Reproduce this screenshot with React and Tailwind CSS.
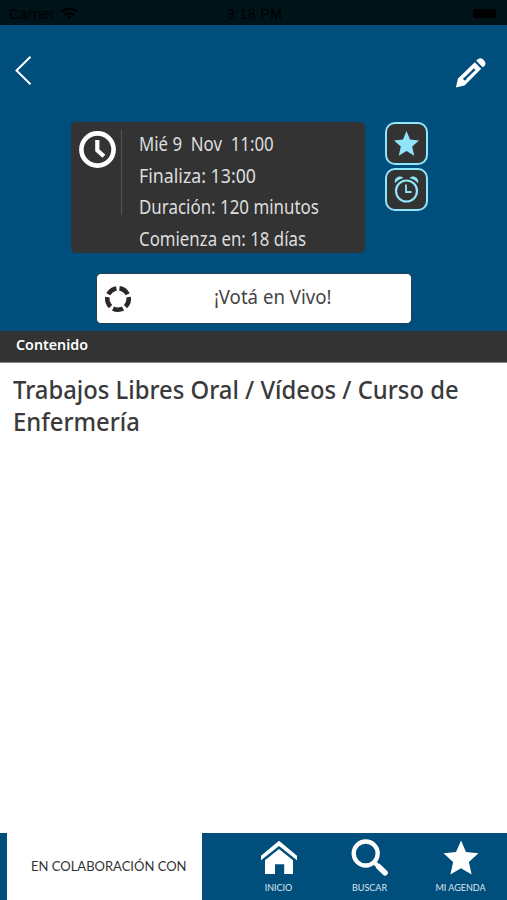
const details = [
  { text: 'Mié 9\u00a0 Nov\u00a0 11:00', fit: 'scale-x-[0.885]' },
  { text: 'Finaliza: 13:00', fit: 'scale-x-[0.935]' },
  { text: 'Duración: 120 minutos', fit: 'scale-x-[0.89]' },
  { text: 'Comienza en: 18 días', fit: 'scale-x-[0.885]' },
];

function StatusBar() {
  return (
    <div className="flex h-[25px] items-center justify-between bg-[#001318] pl-[9px] pr-[11px] pt-[2px] font-['Liberation_Sans',sans-serif] text-[14px] leading-none text-black">
      <div className="flex w-[216px] items-center gap-[6px]">
        <span className="tracking-[0.5px]">Carrier</span>
        <svg className="h-[13px] w-[17px]" viewBox="0 0 17 13" fill="none" stroke="currentColor" strokeWidth="2.4">
          <path d="M1 4.7a10.6 10.6 0 0 1 15 0M4 8a6.4 6.4 0 0 1 9 0" />
          <path d="M8.5 12.5 6 9.8a3.6 3.6 0 0 1 5 0z" fill="currentColor" stroke="none" />
        </svg>
      </div>
      <span className="w-[58px] whitespace-nowrap text-center tracking-[0.5px]">3:18 PM</span>
      <div className="flex w-[212px] justify-end">
        <div className="h-[9px] w-[23px] rounded-[2px] bg-black" />
      </div>
    </div>
  );
}

function Header() {
  return (
    <header className="flex h-[306px] flex-col bg-[#004e7b]">
      <div className="flex h-[97px] items-start justify-between pl-[15px] pr-[21px] pt-[31px]">
        <svg className="h-[29px] w-[17px]" viewBox="0 0 17 29" fill="none" stroke="#fff" strokeWidth="2">
          <path d="M15.5.8 1.5 14.5l14 13.7" />
        </svg>
        <svg className="mt-[1px] h-[31px] w-[31px]" viewBox="0 0 31 31">
          <path d="M.8 30.6 3 21.500 19.800 5.200l6.400 6.600L9.500 28.500z" fill="#fff" />
          <path d="M21.300 3.700c1.600-1.900 3.400-3.100 5.200-2.200 2 .9 3.700 2.800 4 4.700.2 1.600-1.100 2.900-2.900 4.100z" fill="#fff" />
          <path d="m8.800 22.800 10.900-10.700" stroke="#004e7b" strokeWidth="2.2" />
          <path d="m8.800 20.800 2.300 2.300" stroke="#004e7b" strokeWidth="1.4" />
        </svg>
      </div>
      <div className="flex gap-[20px] pl-[71px]">
        <section className="flex h-[131px] w-[294px] rounded-[5px] bg-[#333]">
          <div className="mt-[8px] flex h-[85px] w-[51px] border-r border-[#555] pl-[8px] pt-[1px]">
            <svg className="h-[37px] w-[37px]" viewBox="0 0 37 37" fill="none" stroke="#fff">
              <circle cx="18.5" cy="18.5" r="16.1" strokeWidth="4.6" />
              <path d="M18.3 9v10.2l6.6 6" strokeWidth="4.2" />
            </svg>
          </div>
          <div className="flex flex-col pl-[17px] pt-[7px]">
            {details.map((d) => (
              <p key={d.text} className="h-[31.7px] whitespace-nowrap text-[19px] leading-[31.7px] text-[#dedede]">
                <span className={`inline-block origin-left ${d.fit}`}>{d.text}</span>
              </p>
            ))}
          </div>
        </section>
        <div className="flex flex-col gap-[3px]">
          <button className="flex h-[43px] w-[43px] items-center justify-center rounded-[10px] border-2 border-[#91e5fa] bg-[#333]">
            <svg className="h-[25px] w-[25px]" viewBox="0 0 25 25" fill="#91e5fa">
              <path d="m12.500 0 3.500 8.600 9 .8-6.800 6.200 2 9.200-7.700-4.900-7.700 4.900 2-9.200L0 9.400l9-.8z" />
            </svg>
          </button>
          <button className="flex h-[43px] w-[43px] items-center justify-center rounded-[10px] border-2 border-[#91e5fa] bg-[#333]">
            <svg className="h-[27px] w-[25px]" viewBox="0 0 25 27" fill="none" stroke="#91e5fa" strokeWidth="2.200">
              <circle cx="12.5" cy="15" r="10.5" />
              <path d="M12 8.5V16h5.5" strokeWidth="1.800" />
              <path d="M1 7.300C-.5 2.500 5-2 9.500 1.900 5.500 3 3 4.500 1 7.300zM24 7.300C25.500 2.500 20-2 15.500 1.900c4 1.100 6.500 2.600 8.500 5.400z" fill="#91e5fa" stroke="none" />
            </svg>
          </button>
        </div>
      </div>
      <button className="ml-[96px] mt-[20px] flex h-[51px] w-[316px] items-center rounded-[5px] border border-[#263e4d] bg-white pl-[7px]">
        <svg className="h-[28px] w-[28px]" viewBox="0 0 28 28" fill="none" stroke="#292929" strokeWidth="4.6">
          <circle cx="14" cy="14" r="10.7" pathLength="100" strokeDasharray="15.500 4.500" strokeDashoffset="-7.2" transform="rotate(-108 14 14)" />
        </svg>
        <span className="ml-[82px] origin-left scale-x-[0.98] whitespace-nowrap pb-[2px] text-[19px] text-[#444]">¡Votá en Vivo!</span>
      </button>
    </header>
  );
}

function BottomNav() {
  return (
    <nav className="flex h-[67px] bg-[#004e7b] font-['Lato',sans-serif]">
      <div className="ml-[7px] flex w-[195px] items-center bg-white pl-[24px] text-[13px] text-[#333]">EN COLABORACIÓN CON</div>
      <div className="ml-[31px] grid grid-cols-[91px_91px_91px] text-[9px] text-[#dce7ee]">
        <div className="flex flex-col items-center pt-[7px]">
          <svg className="h-[36px] w-[38px]" viewBox="0 0 38 36" fill="#fff">
            <path d="M1 15.700 19 .8l18 14.900v4.600L19 5.900 1 20.300z" />
            <path d="M5 20.300 19 8.900l14 11.400v13.700h-8.800v-9.700h-9.200v9.700H5z" />
          </svg>
          <span className="mt-[6px] leading-[12px]">INICIO</span>
        </div>
        <div className="flex flex-col items-center pt-[6px]">
          <svg className="h-[37px] w-[38px]" viewBox="0 0 38 37" fill="none" stroke="#fff">
            <circle cx="14.700" cy="14.500" r="12" strokeWidth="4.300" />
            <path d="m23 23 3 3" strokeWidth="4" />
            <path d="m27.500 27.500 6.500 6.300" strokeWidth="5.600" strokeLinecap="round" />
          </svg>
          <span className="mt-[6px] leading-[12px]">BUSCAR</span>
        </div>
        <div className="flex flex-col items-center pt-[7px]">
          <svg className="h-[36px] w-[36px]" viewBox="0 0 36 36" fill="#fff">
            <path d="m18 .5 5 11.600 12.500 1.100-9.600 8.800 2.700 12.500L18 28.200 7.400 34.500 10.100 22 .5 13.200 13 12.100z" />
          </svg>
          <span className="mt-[6px] leading-[12px]">MI AGENDA</span>
        </div>
      </div>
    </nav>
  );
}

export default function App() {
  return (
    <div className="flex h-[900px] w-[507px] flex-col overflow-hidden bg-white font-['Noto_Sans',sans-serif]">
      <StatusBar />
      <Header />
      <div className="h-[31px] bg-[#333] pl-[16px] text-[15px] leading-[27px] text-white">
        <span className="inline-block origin-left scale-x-[0.95] font-semibold">Contenido</span>
      </div>
      <main className="flex-1 border-t border-[#888] pl-[13px] pt-[10px]">
        <h1 className="w-[468px] origin-left scale-x-[0.953] whitespace-nowrap text-[25px] font-medium leading-[32px] text-[#3a3a3a]">
          Trabajos Libres Oral / Vídeos / Curso de
          <br />
          Enfermería
        </h1>
      </main>
      <BottomNav />
    </div>
  );
}
